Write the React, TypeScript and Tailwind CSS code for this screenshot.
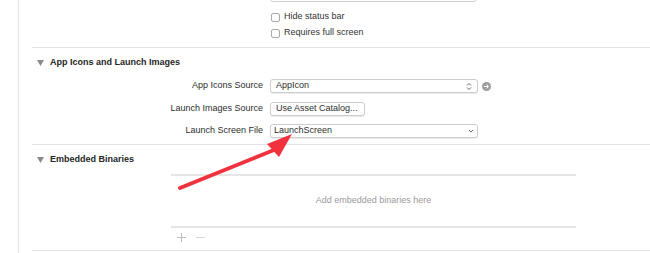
import React from 'react';

const font = { fontFamily: '"Liberation Sans", Arial, sans-serif' };

const Disclosure: React.FC<{ title: string }> = ({ title }) => (
  <div className="flex items-center h-[13px]">
    <svg width="7" height="6" viewBox="0 0 7 6" className="ml-[5px] mr-[6px]">
      <path d="M0 0 L7 0 L3.5 6 Z" fill="#8a8a8a" />
    </svg>
    <span className="text-[9px] font-bold text-[#262626]">{title}</span>
  </div>
);

const Row: React.FC<{ label: string; children: React.ReactNode; className?: string }> = ({ label, children, className }) => (
  <div className={`flex items-center h-[14px] ${className ?? ''}`}>
    <div className="w-[231px] text-right text-[9px] text-[#2e2e2e]">{label}</div>
    <div className="ml-[7px] flex items-center">{children}</div>
  </div>
);

const Check: React.FC<{ label: string }> = ({ label }) => (
  <div className="flex items-center h-[16px]">
    <span className="w-[9px] h-[9px] rounded-[2px] border border-[#a9a9a9] bg-white" />
    <span className="ml-[4px] text-[9px] text-[#333]">{label}</span>
  </div>
);

export default function App() {
  return (
    <div className="relative w-[650px] h-[253px] bg-white overflow-hidden" style={font}>
      <div className="ml-[18px] h-full border-l border-[#e2e2e2] pl-[13px] flex flex-col">
        {/* top leftovers */}
        <div className="h-[48px] shrink-0 flex flex-col border-b border-[#e3e3e3]">
          <div className="ml-[238px] w-[207px] h-[14px] -mt-[12px] border border-[#cfcfcf] rounded-[3px] bg-white" />
          <div className="ml-[239px] mt-[7px]">
            <Check label="Hide status bar" />
            <Check label="Requires full screen" />
          </div>
        </div>

        {/* App icons */}
        <div className="pt-[8px] pb-[6px] shrink-0 border-b border-[#e3e3e3]">
          <Disclosure title="App Icons and Launch Images" />
          <Row label="App Icons Source" className="mt-[10px]">
            <div className="w-[208px] h-[14px] border border-[#cdcdcd] rounded-[3px] bg-white flex items-center px-[5px] text-[9px] text-[#2e2e2e] shadow-[0_1px_0_#ececec]">
              <span className="flex-1">AppIcon</span>
              <svg width="6" height="9" viewBox="0 0 6 9">
                <path d="M1 3.5 L3 1.5 L5 3.5 M1 5.5 L3 7.5 L5 5.5" stroke="#555" strokeWidth="0.9" fill="none" />
              </svg>
            </div>
            <svg width="9" height="9" viewBox="0 0 9 9" className="ml-[4px]">
              <circle cx="4.5" cy="4.5" r="4.5" fill="#9d9d9d" />
              <path d="M2 4.5 H6.5 M4.6 2.6 L6.5 4.5 L4.6 6.4" stroke="#fff" strokeWidth="1" fill="none" />
            </svg>
          </Row>
          <Row label="Launch Images Source" className="mt-[9px]">
            <div className="h-[14px] w-[95px] border border-[#cdcdcd] rounded-[3px] bg-white flex items-center px-[5px] text-[9px] text-[#2e2e2e] shadow-[0_1px_0_#ececec]">
              Use Asset Catalog...
            </div>
          </Row>
          <Row label="Launch Screen File" className="mt-[8px]">
            <div className="w-[208px] h-[14px] border border-[#cdcdcd] rounded-[3px] bg-white flex items-center text-[9px] text-[#2e2e2e] shadow-[0_1px_0_#ececec]">
              <span className="flex-1 pl-[3px]">LaunchScreen</span>
              <span className="w-[12px] h-full flex items-center justify-center">
                <svg width="6" height="4" viewBox="0 0 6 4">
                  <path d="M1 1 L3 3 L5 1" stroke="#555" strokeWidth="0.9" fill="none" />
                </svg>
              </span>
            </div>
          </Row>
        </div>

        {/* Embedded binaries */}
        <div className="pt-[8px] h-[106px] shrink-0 border-b border-[#e3e3e3]">
          <Disclosure title="Embedded Binaries" />
          <div className="ml-[139px] w-[405px] mt-[8px]">
            <div className="h-[54px] border-y-2 border-[#e6e6e6] flex items-center justify-center text-[9px] text-[#9a9a9a]">
              Add embedded binaries here
            </div>
            <div className="flex items-center h-[18px] pl-[6px] gap-[10px]">
              <svg width="9" height="9" viewBox="0 0 9 9">
                <path d="M4.5 0 V9 M0 4.5 H9" stroke="#bdbdbd" strokeWidth="1" />
              </svg>
              <svg width="9" height="9" viewBox="0 0 9 9">
                <path d="M0 4.5 H9" stroke="#d6d6d6" strokeWidth="1" />
              </svg>
            </div>
          </div>
        </div>
      </div>

      {/* annotation arrow */}
      <svg className="absolute left-0 top-0 pointer-events-none" width="650" height="253">
        <line x1="180" y1="188" x2="274" y2="150" stroke="#f0323f" strokeWidth="4" strokeLinecap="round" />
        <path d="M267 144 L292 134 L279 157 Z" fill="#f0323f" />
      </svg>
    </div>
  );
}
